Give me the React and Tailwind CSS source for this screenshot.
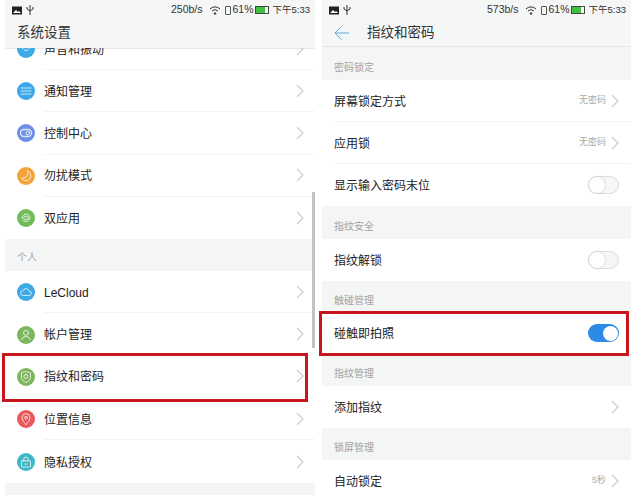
const FONT = '"Liberation Sans", "Noto Sans CJK SC", sans-serif';

function Chevron() {
  return (
    <svg width="8" height="14" viewBox="0 0 8 14" fill="none" stroke="#c9cbcb" strokeWidth="1.1">
      <path d="M1 1l6 6-6 6" />
    </svg>
  );
}

function Circle({ color, children }) {
  return (
    <span className="flex w-[18px] h-[18px] shrink-0 items-center justify-center rounded-full" style={{ background: color }}>
      <svg width="12" height="12" viewBox="0 0 12 12" fill="none" stroke="#fff" strokeOpacity="0.75" strokeWidth="1" strokeLinecap="round" strokeLinejoin="round">
        {children}
      </svg>
    </span>
  );
}

const icons = {
  sound: <Circle color="#3fa9e8"><path d="M4 7.500a3 3 0 0 1 4 0M2.500 5.500a5 5 0 0 1 7 0" /></Circle>,
  notify: <Circle color="#3aa8ea"><path d="M1 3h10M1 6h10M1 9h10" /></Circle>,
  control: <Circle color="#6f8fe6"><rect x="0.500" y="2.500" width="11" height="7" rx="3.500" strokeWidth="1.300" /><circle cx="7.800" cy="6" r="1.800" /></Circle>,
  dnd: <Circle color="#f2a43a"><path d="M7.800 1a5 5 0 1 1-6.300 7 5.300 5.300 0 0 0 6.300-7z" /></Circle>,
  dual: <Circle color="#72bb5b"><path d="M2 6.500a4 4 0 0 1 6.500-3.600c1.200.9 1.800 1.600 1.500 3.100a4 4 0 0 1-6.500 2.700" /><ellipse cx="6" cy="6" rx="2.300" ry="1.900" /></Circle>,
  cloud: <Circle color="#3fa9e8"><path d="M3 9.500a2.300 2.300 0 0 1-.2-4.600 3.300 3.300 0 0 1 6.300.2 2.200 2.200 0 0 1 0 4.400z" /></Circle>,
  user: <Circle color="#7cb75d"><circle cx="6" cy="3.800" r="2.500" /><path d="M1.500 10.800a4.700 4.700 0 0 1 9 0" /></Circle>,
  shield: <Circle color="#7cb75d"><path d="M6 .5l4.500 1.500v4c0 2.700-2.200 4.500-4.500 5.500-2.300-1-4.500-2.800-4.500-5.500V2z" /><path d="M6 3.500a2 2 0 0 1 0 4 2 2 0 0 1 0-4z" /></Circle>,
  pin: <Circle color="#e9585a"><path d="M6 11.500S2 7.800 2 4.600a4 4 0 0 1 8 0C10 7.800 6 11.500 6 11.500z" /><circle cx="6" cy="4.700" r="1.400" /></Circle>,
  lock: <Circle color="#3fb8c6"><rect x="1.500" y="4.800" width="9" height="6.200" rx="1" /><path d="M3.800 4.800V3.200a2.200 2.200 0 0 1 4.400 0v1.600M5 8h2" /></Circle>,
};

function StatusBar({ speed }) {
  return (
    <div className="flex h-[20px] items-center justify-between pl-[7px] pr-[5px] text-[10.500px] text-[#333]">
      <div className="flex items-center gap-[4px]">
        <svg width="10" height="9" viewBox="0 0 10 9"><rect width="10" height="8" y="0.500" fill="#222" /><path d="M1 7l3-3 2 2 1-1 2 2z" fill="#fff" /></svg>
        <svg width="8" height="10" viewBox="0 0 8 10" fill="none" stroke="#333" strokeWidth="1"><path d="M4 0v10M1 2v2l3 2 3-2V2" /></svg>
      </div>
      <div className="flex items-center">
        <span className="mr-[7px]">{speed}</span>
        <svg className="mr-[4px]" width="12" height="9" viewBox="0 0 12 9" fill="none" stroke="#333" strokeWidth="1"><path d="M1 3a7 7 0 0 1 10 0M3 5a4.300 4.300 0 0 1 6 0" /><circle cx="6" cy="7.500" r="0.800" fill="#333" /></svg>
        <span className="mr-[1px] h-[9px] w-[6px] rounded-[1px] border border-[#555]" />
        <span>61%</span>
        <span className="ml-[1px] flex h-[8px] w-[14px] border border-[#444] bg-white"><span className="h-full w-[9px] bg-[#3fc23f]" /></span>
        <span className="ml-[4px] text-[9.500px]">下午5:33</span>
      </div>
    </div>
  );
}

function MainRow({ icon, label, last, clipped }) {
  const row = (
    <div className="flex h-[42.300px] items-center pl-[12px]">
      {icons[icon]}
      <div className={`ml-[9px] flex h-full flex-1 items-center justify-between pr-[11px] ${last ? '' : 'border-b border-[#f3f4f4]'}`}>
        <span className="pt-[2px] text-[12px] text-[#222]">{label}</span>
        <Chevron />
      </div>
    </div>
  );
  if (clipped) return <div className="h-[22px] overflow-hidden"><div className="-mt-[20px]">{row}</div></div>;
  return row;
}

function Section({ label, h, pt }) {
  return <div className={`bg-[#f4f5f5] ${h} ${pt} pl-[12px] text-[10px] leading-[15px] text-[#a2a4a4]`}>{label}</div>;
}

function Row({ label, value, toggle, noBorder }) {
  return (
    <div className="bg-white pl-[12px] h-[42px]">
      <div className={`flex h-full items-center justify-between pr-[12px] ${noBorder ? '' : 'border-b border-[#f3f4f4]'}`}>
        <span className="pt-[2px] text-[12px] text-[#222]">{label}</span>
        {toggle === undefined ? (
          <span className="flex items-center gap-[5px]">
            {value && <span className="text-[9px] text-[#a8aaaa]">{value}</span>}
            <Chevron />
          </span>
        ) : toggle ? (
          <span className="flex h-[18px] w-[31px] items-center justify-end rounded-full bg-[#2b8be6] pr-[1px]"><span className="h-[15px] w-[15px] rounded-full bg-white" /></span>
        ) : (
          <span className="flex h-[18px] w-[31px] items-center rounded-full border border-[#dcdddd] bg-[#f6f6f6]"><span className="h-[16px] w-[16px] rounded-full bg-white shadow-[0_0_2px_#bbb]" /></span>
        )}
      </div>
    </div>
  );
}

export default function App() {
  return (
    <div className="relative flex h-[495px] w-[635px] overflow-hidden bg-white pl-[5px]" style={{ fontFamily: FONT }}>
      <div className="w-[310px]">
        <div className="h-[48px] bg-[#f5f6f6] shadow-[0_1px_1px_#e6e7e7]">
          <StatusBar speed="250b/s" />
          <div className="pl-[12px] text-[13.500px] leading-[26px] text-[#333]">系统设置</div>
        </div>
        <MainRow icon="sound" label="声音和振动" clipped />
        <MainRow icon="notify" label="通知管理" />
        <MainRow icon="control" label="控制中心" />
        <MainRow icon="dnd" label="勿扰模式" />
        <MainRow icon="dual" label="双应用" last />
        <Section label="个人" h="h-[32px]" pt="pt-[11px]" />
        <MainRow icon="cloud" label="LeCloud" />
        <MainRow icon="user" label="帐户管理" />
        <MainRow icon="shield" label="指纹和密码" />
        <MainRow icon="pin" label="位置信息" />
        <MainRow icon="lock" label="隐私授权" last />
        <div className="h-[20px] bg-[#f4f5f5]" />
      </div>
      <div className="ml-[7px] w-[309px]">
        <div className="h-[47px] border-b border-[#e6e7e7] bg-[#f5f6f6]">
          <StatusBar speed="573b/s" />
          <div className="flex items-center">
            <svg className="ml-[12px]" width="15" height="14" viewBox="0 0 15 14" fill="none" stroke="#5aa9dc" strokeWidth="1"><path d="M15 7H1M7.500 0.500 1 7l6.500 6.500" /></svg>
            <span className="ml-[18px] text-[13.500px] leading-[26px] text-[#333]">指纹和密码</span>
          </div>
        </div>
        <Section label="密码锁定" h="h-[33px]" pt="pt-[13px]" />
        <Row label="屏幕锁定方式" value="无密码" />
        <Row label="应用锁" value="无密码" />
        <Row label="显示输入密码末位" toggle={false} noBorder />
        <Section label="指纹安全" h="h-[33px]" pt="pt-[13px]" />
        <Row label="指纹解锁" toggle={false} noBorder />
        <Section label="触碰管理" h="h-[31px]" pt="pt-[12px]" />
        <Row label="碰触即拍照" toggle noBorder />
        <Section label="指纹管理" h="h-[32px]" pt="pt-[12px]" />
        <Row label="添加指纹" noBorder />
        <Section label="锁屏管理" h="h-[32px]" pt="pt-[12px]" />
        <Row label="自动锁定" value="5秒" noBorder />
      </div>
      <div className="absolute left-[312px] top-[192px] h-[156px] w-[3px] bg-[#c2c4c4]" />
      <div className="absolute left-[2px] top-[353px] h-[49px] w-[306px] border-[3px] border-[#c8161f]" />
      <div className="absolute left-[319px] top-[311px] h-[45px] w-[310px] border-[3px] border-[#c8161f]" />
    </div>
  );
}
